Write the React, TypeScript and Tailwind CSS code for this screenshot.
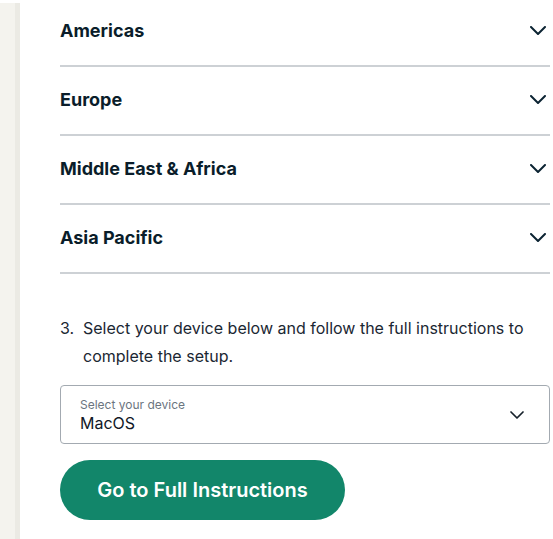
import React from "react";

const Chevron = ({ className = "" }: { className?: string }) => (
  <svg width="16" height="9" viewBox="0 0 16 9" fill="none" className={className}>
    <path d="M1 1L8 8L15 1" stroke="currentColor" strokeWidth="2" strokeLinecap="round" strokeLinejoin="round" />
  </svg>
);

const regions = ["Americas", "Europe", "Middle East & Africa", "Asia Pacific"];

export default function App() {
  return (
    <div className="flex min-h-[539px] bg-white" style={{ fontFamily: "Inter, 'Noto Sans', sans-serif" }}>
      <div className="flex w-[20px] shrink-0 pt-[3px]">
        <div className="w-[15px] bg-[#f4f3ee]" />
        <div className="w-[5px] bg-[#ebeae4]" />
      </div>
      <div className="flex-1 pl-[40px] pr-[3px]">
        <div className="-mt-[2px]">
          {regions.map((r) => (
            <div
              key={r}
              className="flex h-[69px] items-center justify-between border-b-2 border-[#cdd1d5] pb-[2px] pr-[4px]"
            >
              <span className="text-[18px] font-bold text-[#0a1d2a]">{r}</span>
              <Chevron className="text-[#0c2433]" />
            </div>
          ))}
        </div>
        <div className="mt-[40px] flex text-[16px] leading-[28px] text-[#1b2733]">
          <span className="w-[23px] shrink-0">3.</span>
          <span>Select your device below and follow the full instructions to complete the setup.</span>
        </div>
        <div className="mt-[15px] flex h-[59px] items-center justify-between rounded-[4px] border border-[#a3aab1] pl-[19px] pr-[25px]">
          <div className="flex flex-col pt-[1px]">
            <span className="text-[12px] leading-[15px] text-[#6b7580]">Select your device</span>
            <span className="text-[16px] leading-[22px] text-[#111827]">MacOS</span>
          </div>
          <svg width="14" height="8" viewBox="0 0 14 8" fill="none" className="text-[#17222c]">
            <path d="M1 1L7 7L13 1" stroke="currentColor" strokeWidth="1.7" strokeLinecap="round" strokeLinejoin="round" />
          </svg>
        </div>
        <button className="mt-[16px] flex h-[60px] w-[285px] items-center justify-center rounded-full bg-[#12866a] text-[20px] font-semibold text-white">
          Go to Full Instructions
        </button>
      </div>
    </div>
  );
}
